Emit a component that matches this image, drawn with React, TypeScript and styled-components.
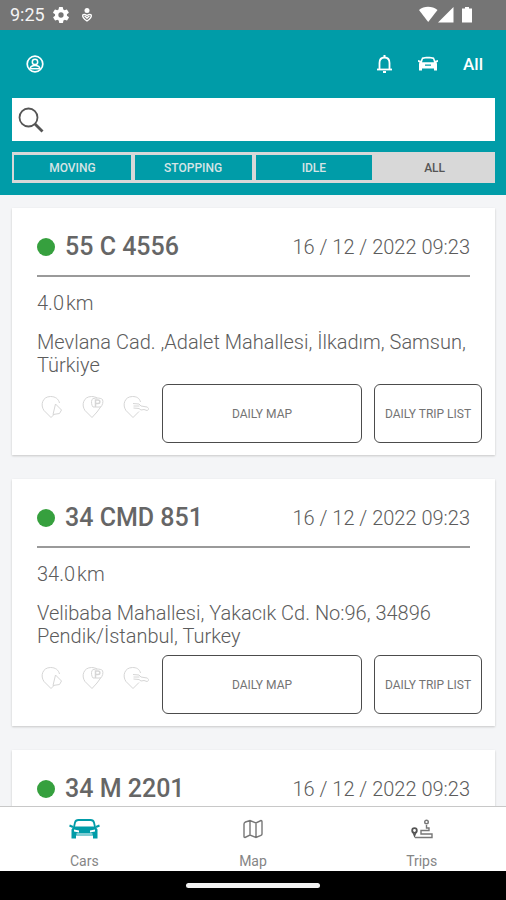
import React, { useState } from "react";
import styled, { createGlobalStyle } from "styled-components";

const TEAL = "#009ca8";
const INK = "#5c5c5c";

const GlobalStyle = createGlobalStyle`
  * { box-sizing: border-box; }
  body { margin: 0; background: #f4f5f7; font-family: Roboto, "Liberation Sans", sans-serif; color: #747474; }
  button, input { font: inherit; color: inherit; }
`;

const Screen = styled.div`
  height: 100vh;
  display: flex;
  flex-direction: column;
  overflow: hidden;
`;

const StatusBar = styled.div`
  flex: none;
  height: 30px;
  padding: 0 31px 0 10px;
  display: flex;
  align-items: center;
  justify-content: space-between;
  background: #757575;
  color: #fff;
`;

const StatusGroup = styled.div`
  display: flex;
  align-items: center;
`;

const Clock = styled.span`
  margin-right: 8px;
  font-size: 18px;
  line-height: 20px;
  color: #f4f4f4;
`;

const Header = styled.header`
  flex: none;
  padding: 0 11px 12px 12px;
  background: ${TEAL};
`;

const Toolbar = styled.div`
  height: 68px;
  padding: 0 12px 0 14px;
  display: flex;
  align-items: center;
  justify-content: space-between;
  color: #fff;
`;

const ToolbarActions = styled.div`
  display: flex;
  align-items: center;
  gap: 25px;
`;

const ToolButton = styled.button`
  display: flex;
  align-items: center;
  padding: 0;
  border: 0;
  background: none;
  font-size: 17px;
  font-weight: 500;
  line-height: 24px;
  cursor: pointer;
`;

const SearchBox = styled.label`
  height: 43px;
  padding: 0 6px;
  display: flex;
  align-items: center;
  gap: 8px;
  background: #fff;
`;

const SearchInput = styled.input`
  flex: 1;
  min-width: 0;
  border: 0;
  outline: 0;
  background: none;
  font-size: 18px;
`;

const Filters = styled.div`
  height: 31px;
  margin-top: 11px;
  display: grid;
  grid-template-columns: repeat(4, 1fr);
  background: #d8d8d8;
`;

const FilterButton = styled.button<{ $active: boolean }>`
  margin: 0;
  padding: 0;
  border: 2px solid #d8d8d8;
  border-width: 3px 2px;
  background: ${(p) => (p.$active ? "#d8d8d8" : TEAL)};
  color: ${(p) => (p.$active ? "#555" : "#d5e4e6")};
  font-size: 12px;
  font-weight: 500;
  cursor: pointer;
`;

const CardList = styled.main`
  flex: 1;
  min-height: 0;
  overflow: hidden;
  padding: 13px 11px 0 12px;
  display: flex;
  flex-direction: column;
  gap: 24px;
`;

const Card = styled.article`
  flex: none;
  padding: 19px 13px 12px 25px;
  background: #fff;
  box-shadow: 0 1px 2px #c8c8c8;
`;

const CardHead = styled.div`
  height: 50px;
  margin-right: 12px;
  padding-bottom: 9px;
  display: flex;
  align-items: center;
  gap: 10px;
  border-bottom: 2px solid #9a9a9a;
`;

const StatusDot = styled.span`
  width: 18px;
  height: 18px;
  border-radius: 50%;
  background: #36a03e;
`;

const Plate = styled.h2`
  flex: 1;
  margin: 0;
  font-size: 25px;
  font-weight: 500;
  line-height: 30px;
  color: #666;
`;

const Stamp = styled.time`
  font-size: 20px;
  font-weight: 300;
  line-height: 28px;
  color: ${INK};
`;

const Distance = styled.p`
  margin: 14px 0 0;
  display: flex;
  gap: 2px;
  font-size: 20px;
  font-weight: 300;
  line-height: 24px;
  color: ${INK};
`;

const Address = styled.p`
  margin: 16px 0 0;
  min-height: 46px;
  font-size: 20px;
  font-weight: 300;
  line-height: 23px;
  color: ${INK};
`;

const CardActions = styled.div`
  margin-top: 7px;
  display: flex;
  gap: 12px;
`;

const PinRow = styled.div`
  width: 113px;
  padding: 11px 0 0 4px;
  display: flex;
  align-items: flex-start;
  gap: 19px;
  color: #d6d6d6;
`;

const ActionButton = styled.button<{ $grow?: boolean }>`
  flex: ${(p) => (p.$grow ? "1" : "none")};
  width: ${(p) => (p.$grow ? "auto" : "108px")};
  height: 59px;
  padding: 0;
  border: 1px solid #4c4c4c;
  border-radius: 6px;
  background: #fff;
  font-size: 12px;
  white-space: nowrap;
  cursor: pointer;
`;

const TabBar = styled.nav`
  flex: none;
  height: 65px;
  display: grid;
  grid-template-columns: repeat(3, 1fr);
  border-top: 1px solid #c8c8c8;
  background: #fff;
`;

const Tab = styled.a`
  display: flex;
  flex-direction: column;
  align-items: center;
  gap: 10px;
  padding-top: 10px;
  font-size: 14px;
  line-height: 20px;
  color: #858585;
  text-decoration: none;
`;

const TabIcon = styled.span`
  height: 24px;
  display: flex;
  align-items: center;
`;

const GestureBar = styled.div`
  flex: none;
  height: 29px;
  display: flex;
  align-items: center;
  justify-content: center;
  background: #000;
`;

const GestureHandle = styled.span`
  width: 134px;
  height: 5px;
  border-radius: 3px;
  background: #f2f2f2;
`;

const GearIcon = () => (
  <svg width="16" height="16" viewBox="2 2 20 20" fill="currentColor" aria-hidden="true">
    <path d="M19.400 13a7.600 7.600 0 0 0 0-2l2.100-1.600a.5.5 0 0 0 .1-.7l-2-3.400a.5.5 0 0 0-.6-.2l-2.500 1a7.300 7.300 0 0 0-1.700-1l-.4-2.600a.5.5 0 0 0-.5-.5h-4a.5.5 0 0 0-.5.500l-.4 2.600a7.300 7.300 0 0 0-1.700 1l-2.500-1a.5.5 0 0 0-.6.200l-2 3.400a.5.5 0 0 0 .1.700L4.600 11a7.600 7.600 0 0 0 0 2l-2.100 1.600a.5.5 0 0 0-.1.700l2 3.400a.5.5 0 0 0 .6.200l2.500-1a7.300 7.300 0 0 0 1.700 1l.4 2.600a.5.5 0 0 0 .5.500h4a.5.5 0 0 0 .5-.5l.4-2.600a7.300 7.300 0 0 0 1.700-1l2.500 1a.5.5 0 0 0 .6-.2l2-3.400a.5.5 0 0 0-.1-.7ZM12 15.300a3.300 3.300 0 1 1 0-6.600 3.300 3.300 0 0 1 0 6.600Z" />
  </svg>
);

const HeartDropIcon = () => (
  <svg width="38" height="16" viewBox="-12 0 38 16" fill="none" stroke="currentColor" aria-hidden="true">
    <circle cx="6" cy="3.500" r="2.500" fill="currentColor" stroke="none" />
    <path d="M1.800 8c1.200-1.500 2.700-.5 4.200.5C7.500 7.500 9 6.500 10.200 8c.7 2-1.200 4-4.200 6-3-2-4.900-4-4.200-6Z" strokeWidth="1.400" />
    <path d="M3.500 8.800 6 11l2.500-2.200" strokeWidth="1.400" />
  </svg>
);

const SignalIcons = () => (
  <svg width="56" height="18" viewBox="0 0 56 18" fill="#fff" aria-hidden="true">
    <path d="M0 4C5-.2 13-.2 18.500 4L9.200 16Z" />
    <path d="M19 16.500 34.500 1V16.500Z" />
    <path d="M43 2.500h3V1h4v1.500h3v14H43Z" />
  </svg>
);

const ProfileIcon = () => (
  <svg width="18" height="18" viewBox="0 0 18 18" fill="none" stroke="currentColor" aria-hidden="true">
    <circle cx="9" cy="9" r="7.800" strokeWidth="1.700" />
    <circle cx="9" cy="6.900" r="2.700" strokeWidth="1.500" />
    <path d="M4 14c.3-2.500 2-3.500 5-3.500s4.700 1 5 3.500" strokeWidth="1.500" />
    <path d="M4.500 13.700h9" strokeWidth="1.500" />
  </svg>
);

const BellIcon = () => (
  <svg width="17" height="20" viewBox="0 0 17 20" fill="none" stroke="currentColor" aria-hidden="true">
    <path d="M3.500 15V9c0-3.500 2-5.500 5-5.500s5 2 5 5.500v6" strokeWidth="1.800" />
    <path d="M1 15.500h15" strokeWidth="1.800" />
    <path d="M8.500 1v2.500M7 18h3" strokeWidth="2" />
  </svg>
);

const SmallCarIcon = () => (
  <svg width="20" height="16" viewBox="0 0 20 16" fill="currentColor" aria-hidden="true">
    <path
      fillRule="evenodd"
      d="M4 1.500C7 .5 13 .5 16 1.500l1.300 3.300L20 4v1.800l-1.500.6.500 1.300V14.500h-3V12.500H4v2H1V7.700l.5-1.300L0 5.800V4l2.700.8ZM5 3 4 6.200h12L15 3C12 2.400 8 2.400 5 3Zm2 6.800h6V8.500H7Z"
    />
  </svg>
);

const SearchIcon = () => (
  <svg width="26" height="26" viewBox="0 0 26 26" fill="none" stroke="#555" aria-hidden="true">
    <circle cx="10.500" cy="10.500" r="9" strokeWidth="1.800" />
    <path d="m17 17 7.500 7.500" strokeWidth="2.800" />
  </svg>
);

const IgnitionPin = () => (
  <svg width="22" height="24" viewBox="0 0 22 24" fill="none" stroke="currentColor" aria-hidden="true">
    <path d="M13 19.500 10 22.500 3 15.500C-1 10 1.500 1.500 9.500 1.500c5 0 8 2.500 9 6.500" />
    <path d="m14.500 9 6 6-2 3.500-6.500 1Z" />
  </svg>
);

const ParkingPin = () => (
  <svg width="22" height="24" viewBox="0 0 22 24" fill="none" stroke="currentColor" aria-hidden="true">
    <path d="M10 22.500 3 15.500C-1 10 1.500 1.500 9.500 1.500c2 0 4 .5 5.500 1.500M10 22.500l5-5.500 4-5.500" />
    <path d="M10 4.500c1.500-2 8.500-2 10.500 0 1 2.500 0 6-2 7.500l-7.500 0c-1.500-2-2-5-1-7.500Z" />
    <path d="M13.500 12V5h2.500c2.500 0 2.500 3.500 0 3.500h-2.500" strokeWidth="1.500" />
  </svg>
);

const KeyPin = () => (
  <svg width="26" height="24" viewBox="0 0 26 24" fill="none" stroke="currentColor" aria-hidden="true">
    <path d="M16 16.500 10 22.500 3 15.500C-1 10 1.500 1.500 9.500 1.500c4 0 7 1.500 8 5.500" />
    <path d="m10 8.500 6 .5 2 2 6 1c2 1 2 3 0 3.500l-3-1-3 .5-2-1.500-5.500-.5" />
    <path d="M10.500 11h6" />
  </svg>
);

const CarIcon = () => (
  <svg width="31" height="20" viewBox="0 0 31 20" aria-hidden="true">
    <g fill="none" stroke={TEAL}>
      <path d="M5 8 6 3.500C6.500 1.500 7.500 1 9.500 1h12c2 0 3 .5 3.500 2.500l1 4.500" strokeWidth="1.800" />
      <path d="M.5 6.500 4 8M30.500 6.500 27 8" strokeWidth="2" />
    </g>
    <path
      fill={TEAL}
      fillRule="evenodd"
      d="M4.500 7.500h22L28.500 10.500v9h-4.500V16.500H7v3H2.500v-9ZM5 10.500v2l5 1V11.500ZM26 10.500l-5 1v2l5-1ZM7.500 15.500h16v-1h-16Z"
    />
  </svg>
);

const MapIcon = () => (
  <svg width="20" height="20" viewBox="0 0 20 20" fill="none" stroke="#777" strokeWidth="1.400" aria-hidden="true">
    <path d="M1 5c0-1 .5-1.500 1.500-2L7 1.500 13 4l5-2.500c.7 0 1 .3 1 1V15c0 .6-.3 1-1 1.300l-5 2.200L7 16l-5 2.500c-.7 0-1-.3-1-1ZM7 1.500V16M13 4v14.500" />
  </svg>
);

const RouteIcon = () => (
  <svg width="22" height="20" viewBox="0 0 22 20" fill="none" stroke="#777" strokeWidth="1.400" aria-hidden="true">
    <circle cx="3.500" cy="11.500" r="2.300" stroke="#555" strokeWidth="1.800" />
    <path d="m2 13 1.500 4L5 13" stroke="#555" />
    <path d="M4 18.500h17v-3.500H10v-3.500h8V9h-2.500V6" />
    <circle cx="15.500" cy="3" r="1.800" />
  </svg>
);

const vehicles = [
  { plate: "55 C 4556", km: "4.0", address: "Mevlana Cad. ,Adalet Mahallesi, İlkadım, Samsun, Türkiye" },
  { plate: "34 CMD 851", km: "34.0", address: "Velibaba Mahallesi, Yakacık Cd. No:96, 34896 Pendik/İstanbul, Turkey" },
  { plate: "34 M 2201", km: "", address: "" },
];

const filters = ["MOVING", "STOPPING", "IDLE", "ALL"];

const tabs = [
  { label: "Cars", icon: <CarIcon /> },
  { label: "Map", icon: <MapIcon /> },
  { label: "Trips", icon: <RouteIcon /> },
];

export default function App() {
  const [filter, setFilter] = useState("ALL");
  return (
    <Screen>
      <GlobalStyle />
      <StatusBar>
        <StatusGroup>
          <Clock>9:25</Clock>
          <GearIcon />
          <HeartDropIcon />
        </StatusGroup>
        <SignalIcons />
      </StatusBar>
      <Header>
        <Toolbar>
          <ToolButton aria-label="Profile">
            <ProfileIcon />
          </ToolButton>
          <ToolbarActions>
            <ToolButton aria-label="Notifications">
              <BellIcon />
            </ToolButton>
            <ToolButton aria-label="Vehicles">
              <SmallCarIcon />
            </ToolButton>
            <ToolButton>All</ToolButton>
          </ToolbarActions>
        </Toolbar>
        <SearchBox>
          <SearchIcon />
          <SearchInput type="text" aria-label="Search" />
        </SearchBox>
        <Filters>
          {filters.map((name) => (
            <FilterButton
              key={name}
              $active={name === filter}
              aria-pressed={name === filter}
              onClick={() => setFilter(name)}
            >
              {name}
            </FilterButton>
          ))}
        </Filters>
      </Header>
      <CardList>
        {vehicles.map((v) => (
          <Card key={v.plate}>
            <CardHead>
              <StatusDot />
              <Plate>{v.plate}</Plate>
              <Stamp>16 / 12 / 2022 09:23</Stamp>
            </CardHead>
            {v.km && (
              <>
                <Distance>
                  <span>{v.km}</span>
                  <span>km</span>
                </Distance>
                <Address>{v.address}</Address>
                <CardActions>
                  <PinRow>
                    <IgnitionPin />
                    <ParkingPin />
                    <KeyPin />
                  </PinRow>
                  <ActionButton $grow>DAILY MAP</ActionButton>
                  <ActionButton>DAILY TRIP LIST</ActionButton>
                </CardActions>
              </>
            )}
          </Card>
        ))}
      </CardList>
      <TabBar>
        {tabs.map((t) => (
          <Tab key={t.label} href={`#${t.label.toLowerCase()}`}>
            <TabIcon>{t.icon}</TabIcon>
            {t.label}
          </Tab>
        ))}
      </TabBar>
      <GestureBar>
        <GestureHandle />
      </GestureBar>
    </Screen>
  );
}
